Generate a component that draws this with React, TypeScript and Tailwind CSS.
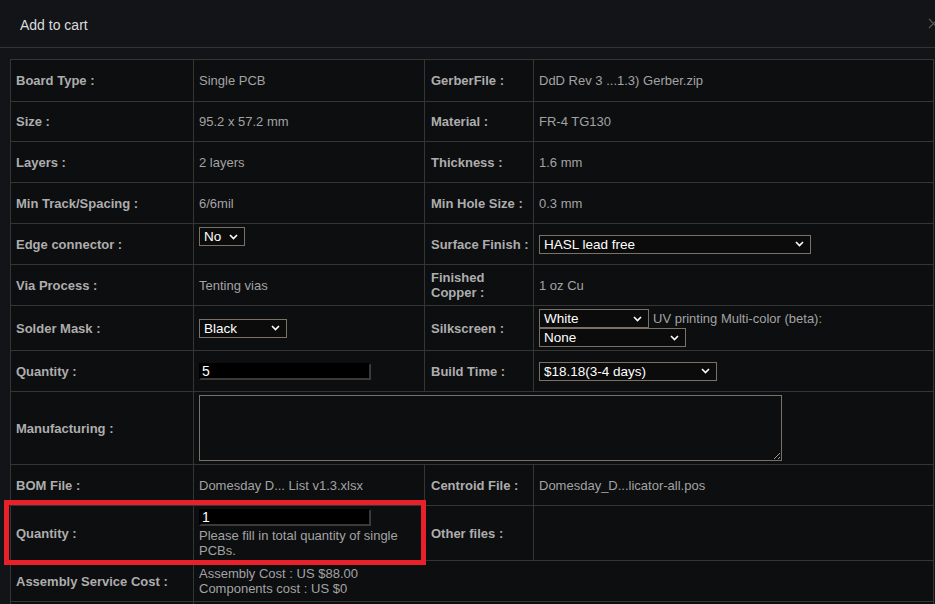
import React from "react";

const Chevron = () => (
  <svg width="9" height="6" viewBox="0 0 9 6" className="absolute right-[7px] top-1/2 -translate-y-1/2 pointer-events-none">
    <path d="M1 1 L4.5 4.5 L8 1" fill="none" stroke="#ffffff" strokeWidth="1.6" />
  </svg>
);

function Sel({ value, w }: { value: string; w: string }) {
  return (
    <div className={`relative inline-block align-middle ${w} h-[19px]`}>
      <div className="h-full w-full border border-[#7a7266] bg-[#0b0b0c] pl-[4px] text-[13.5px] leading-[17px] text-white whitespace-nowrap overflow-hidden">
        {value}
      </div>
      <Chevron />
    </div>
  );
}

function QtyInput({ v }: { v: string }) {
  return (
    <div className="w-[172px] h-[17px] bg-black border-t-2 border-l-2 border-t-black border-l-black border-b-2 border-r-2 border-b-[#3a3a3a] border-r-[#3a3a3a] pl-[1px] text-[14px] leading-[13px] text-white">
      {v}
    </div>
  );
}

const L = "border border-[#353535] pl-[5px] pr-[4px] font-bold text-[#adadad] whitespace-nowrap align-middle";
const L3 = "border border-[#353535] pl-[6px] pr-[2px] font-bold text-[#adadad] whitespace-nowrap align-middle";
const V = "border border-[#353535] pl-[5px] pr-[4px] text-[#a3a3a3] align-middle";

export default function App() {
  return (
    <div className="w-[935px] h-[604px] overflow-hidden bg-[#131417]" style={{ fontFamily: '"Liberation Sans", Arial, sans-serif' }}>
      <div className="relative w-[943px]">
        <div className="h-[48px] border-b border-[#333333] flex items-center justify-between pl-[20px] pr-[4px] pt-[3px]">
          <span className="text-[14px] text-[#dcdcdc]">Add to cart</span>
          <svg width="11" height="11" viewBox="0 0 11 11" className="-mt-[4px]">
            <path d="M1 1 L10 10 M10 1 L1 10" stroke="#5a5a5a" strokeWidth="1.2" />
          </svg>
        </div>
        <div className="px-[10px] pt-[11px]">
          <table className="w-[923px] table-fixed border-collapse bg-[#0d0e10] text-[13px] leading-[15px]">
            <colgroup>
              <col className="w-[183px]" />
              <col className="w-[231px]" />
              <col className="w-[109px]" />
              <col className="w-[400px]" />
            </colgroup>
            <tbody>
              <tr className="h-[42px]">
                <td className={L}>Board Type :</td>
                <td className={V}>Single PCB</td>
                <td className={L3}>GerberFile :</td>
                <td className={V}>DdD Rev 3 ...1.3) Gerber.zip</td>
              </tr>
              <tr className="h-[40px]">
                <td className={L}>Size :</td>
                <td className={V}>95.2 x 57.2 mm</td>
                <td className={L3}>Material :</td>
                <td className={V}>FR-4 TG130</td>
              </tr>
              <tr className="h-[41px]">
                <td className={L}>Layers :</td>
                <td className={V}>2 layers</td>
                <td className={L3}>Thickness :</td>
                <td className={V}>1.6 mm</td>
              </tr>
              <tr className="h-[41px]">
                <td className={L}>Min Track/Spacing :</td>
                <td className={V}>6/6mil</td>
                <td className={L3}>Min Hole Size :</td>
                <td className={V}>0.3 mm</td>
              </tr>
              <tr className="h-[41px]">
                <td className={L}>Edge connector :</td>
                <td className="border border-[#353535] pl-[5px] align-top pt-[3px]">
                  <Sel value="No" w="w-[46px]" />
                </td>
                <td className={L3}>Surface Finish :</td>
                <td className={V}>
                  <Sel value="HASL lead free" w="w-[272px]" />
                </td>
              </tr>
              <tr className="h-[41px]">
                <td className={L}>Via Process :</td>
                <td className={V}>Tenting vias</td>
                <td className={L3}>
                  Finished
                  <br />
                  Copper :
                </td>
                <td className={V}>1 oz Cu</td>
              </tr>
              <tr className="h-[45px]">
                <td className={L}>Solder Mask :</td>
                <td className={V}>
                  <Sel value="Black" w="w-[88px]" />
                </td>
                <td className={L3}>Silkscreen :</td>
                <td className={V}>
                  <div className="flex items-center">
                    <Sel value="White" w="w-[110px]" />
                    <span className="ml-[4px] text-[#a3a3a3] whitespace-nowrap">UV printing Multi-color (beta):</span>
                  </div>
                  <div className="flex">
                    <Sel value="None" w="w-[147px]" />
                  </div>
                </td>
              </tr>
              <tr className="h-[41px]">
                <td className={L}>Quantity :</td>
                <td className={V}>
                  <QtyInput v="5" />
                </td>
                <td className={L3}>Build Time :</td>
                <td className={V}>
                  <Sel value="$18.18(3-4 days)" w="w-[178px]" />
                </td>
              </tr>
              <tr className="h-[73px]">
                <td className={L}>Manufacturing :</td>
                <td colSpan={3} className="border border-[#353535] pl-[5px] align-middle">
                  <textarea
                    className="block w-[583px] h-[66px] border border-[#7a7266] bg-[#0d0e10] resize-y outline-none"
                    defaultValue=""
                  />
                </td>
              </tr>
              <tr className="h-[41px]">
                <td className={L}>BOM File :</td>
                <td className={V}>Domesday D... List v1.3.xlsx</td>
                <td className={L3}>Centroid File :</td>
                <td className={V}>Domesday_D...licator-all.pos</td>
              </tr>
              <tr className="h-[55px]">
                <td className={L}>Quantity :</td>
                <td className={V}>
                  <QtyInput v="1" />
                  <div className="mt-[2px] text-[#a3a3a3]">Please fill in total quantity of single PCBs.</div>
                </td>
                <td className={L3}>Other files :</td>
                <td className={V}></td>
              </tr>
              <tr className="h-[41px]">
                <td className={L}>Assembly Service Cost :</td>
                <td colSpan={3} className={V}>
                  <div>Assembly Cost : US $88.00</div>
                  <div>Components cost : US $0</div>
                </td>
              </tr>
              <tr className="h-[41px]">
                <td className={L}></td>
                <td colSpan={3} className={V}></td>
              </tr>
            </tbody>
          </table>
        </div>
        <div className="absolute left-[4px] top-[500px] w-[422px] h-[65px] border-[5px] border-[#e8202a] pointer-events-none" />
      </div>
    </div>
  );
}
